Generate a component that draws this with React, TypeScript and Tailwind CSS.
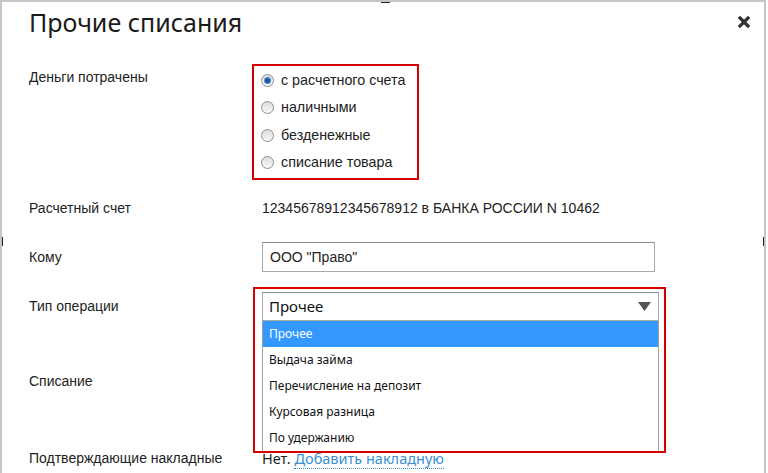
import { useState } from 'react'

const payOptions = ['с расчетного счета', 'наличными', 'безденежные', 'списание товара']
const opTypes = ['Прочее', 'Выдача займа', 'Перечисление на депозит', 'Курсовая разница', 'По удержанию']

function Radio({ checked }: { checked: boolean }) {
  return (
    <span className="w-[13px] h-[13px] rounded-full border border-[#8e8f8f] bg-gradient-to-b from-[#dcdcdc] to-[#f8f8f8] flex items-center justify-center shrink-0">
      {checked && <span className="w-[5px] h-[5px] rounded-full bg-[#1c5a9c] shadow-[0_0_0_1px_#4a8fd8]" />}
    </span>
  )
}

export default function App() {
  const [paid, setPaid] = useState(0)
  const [op] = useState(0)

  return (
    <div className="relative w-[766px] h-[473px] bg-white border-l-2 border-t-2 border-r-2 border-[#c6c6c6] overflow-hidden text-[#222] font-['Liberation_Sans',Arial,sans-serif] text-[14px]">
      {/* resize handles */}
      <div className="absolute top-[-2px] left-[379px] w-[9px] h-[3px] bg-[#222]" />
      <div className="absolute top-[235px] left-[-2px] w-[3px] h-[9px] bg-[#222]" />
      <div className="absolute top-[235px] right-[-2px] w-[3px] h-[9px] bg-[#222]" />

      {/* Header */}
      <div className="flex items-start justify-between pl-[27px] pr-[14px] pt-[3px]">
        <h1 className="text-[25px] leading-[34px] text-[#1a1a1a] font-['Noto_Sans',sans-serif]">Прочие списания</h1>
        <button className="mt-[11px] text-[#333]">
          <svg width="12" height="12" viewBox="0 0 12 12">
            <path d="M2 2 L10 10 M10 2 L2 10" stroke="#333" strokeWidth="3.2" strokeLinecap="square" />
          </svg>
        </button>
      </div>

      <div className="pl-[27px] mt-[25px]">
        {/* Деньги потрачены */}
        <div className="grid grid-cols-[223px_1fr]">
          <div className="pt-[3px] leading-[20px]">Деньги потрачены</div>
          <div className="w-[167px] h-[116px] border-2 border-[#d40000] pl-[7px] pt-[1px]">
            {payOptions.map((o, i) => (
              <label key={o} onClick={() => setPaid(i)} className="flex items-center gap-[7px] h-[27.3px] text-[14.3px] text-[#222] cursor-pointer">
                <Radio checked={paid === i} />
                <span>{o}</span>
              </label>
            ))}
          </div>
        </div>

        {/* Расчетный счет */}
        <div className="grid grid-cols-[233px_1fr] mt-[18px] leading-[20px]">
          <div>Расчетный счет</div>
          <div>12345678912345678912 в БАНКА РОССИИ N 10462</div>
        </div>

        {/* Кому */}
        <div className="grid grid-cols-[233px_1fr] items-center mt-[24px]">
          <div>Кому</div>
          <input
            defaultValue={'ООО "Право"'}
            className="w-[393px] h-[30px] border border-[#a9a9a9] border-t-[#8c8c8c] px-[7px] text-[14px] text-[#222] outline-none font-['Liberation_Sans',Arial,sans-serif]"
          />
        </div>

        {/* Тип операции */}
        <div className="grid grid-cols-[233px_1fr] items-center mt-[20px]">
          <div>Тип операции</div>
          <div className="relative w-[397px]">
            <div className="h-[29px] border border-[#a9a9a9] border-t-[#8c8c8c] bg-white flex items-center justify-between pl-[6px] pr-[7px] font-['Noto_Sans',sans-serif] text-[15px] text-[#111]">
              <span>{opTypes[op]}</span>
              <svg width="13" height="9" viewBox="0 0 13 9">
                <path d="M0 0 H13 L6.5 9 Z" fill="#555" />
              </svg>
            </div>
            {/* dropdown */}
            <div className="absolute z-10 top-[29px] left-0 w-[397px] bg-white border border-t-0 border-[#a0a0a0] font-['Noto_Sans',sans-serif] text-[12px]">
              {opTypes.map((t, i) => (
                <div
                  key={t}
                  className={`h-[26px] flex items-center px-[6px] ${i === op ? 'bg-[#3399ff] text-white' : 'text-[#111]'}`}
                >
                  {t}
                </div>
              ))}
            </div>
            {/* annotation */}
            <div className="absolute z-20 pointer-events-none top-[-5px] left-[-9px] w-[413px] h-[166px] border-2 border-[#d40000]" />
          </div>
        </div>

        {/* Списание */}
        <div className="grid grid-cols-[233px_1fr] mt-[50px] leading-[20px]">
          <div>Списание</div>
          <div />
        </div>

        {/* Подтверждающие накладные */}
        <div className="grid grid-cols-[233px_1fr] mt-[57px] leading-[20px]">
          <div>Подтверждающие накладные</div>
          <div className="font-['Noto_Sans',sans-serif] text-[14.5px]">
            Нет.{' '}
            <a className="text-[#3a8fd0] border-b border-dotted border-[#3a8fd0] cursor-pointer">Добавить накладную</a>
          </div>
        </div>
      </div>
    </div>
  )
}
